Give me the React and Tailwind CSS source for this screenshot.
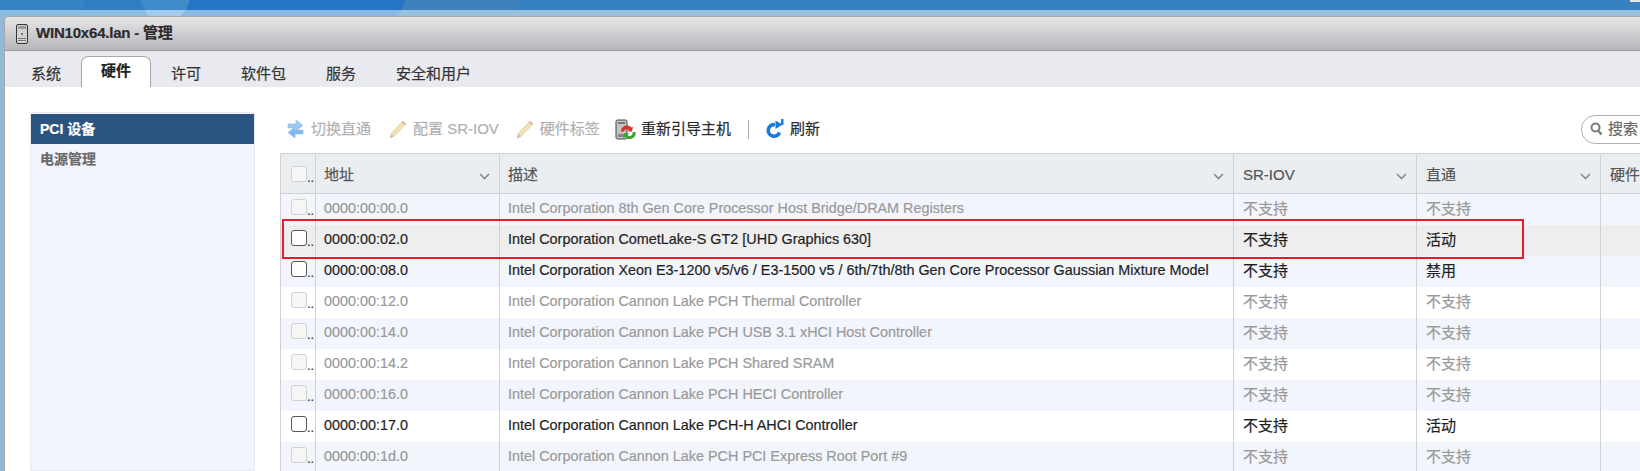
const font = { fontFamily: '"Liberation Sans","Noto Sans CJK SC",sans-serif' };

const rows = [
  ["0000:00:00.0", "Intel Corporation 8th Gen Core Processor Host Bridge/DRAM Registers", "不支持", "不支持", false, "bg-[#f2f5fb]"],
  ["0000:00:02.0", "Intel Corporation CometLake-S GT2 [UHD Graphics 630]", "不支持", "活动", true, "bg-[#eeeeee]"],
  ["0000:00:08.0", "Intel Corporation Xeon E3-1200 v5/v6 / E3-1500 v5 / 6th/7th/8th Gen Core Processor Gaussian Mixture Model", "不支持", "禁用", true, "bg-[#f2f5fb]"],
  ["0000:00:12.0", "Intel Corporation Cannon Lake PCH Thermal Controller", "不支持", "不支持", false, "bg-white"],
  ["0000:00:14.0", "Intel Corporation Cannon Lake PCH USB 3.1 xHCI Host Controller", "不支持", "不支持", false, "bg-[#f2f5fb]"],
  ["0000:00:14.2", "Intel Corporation Cannon Lake PCH Shared SRAM", "不支持", "不支持", false, "bg-white"],
  ["0000:00:16.0", "Intel Corporation Cannon Lake PCH HECI Controller", "不支持", "不支持", false, "bg-[#f2f5fb]"],
  ["0000:00:17.0", "Intel Corporation Cannon Lake PCH-H AHCI Controller", "不支持", "活动", true, "bg-white"],
  ["0000:00:1d.0", "Intel Corporation Cannon Lake PCH PCI Express Root Port #9", "不支持", "不支持", false, "bg-[#f2f5fb]"],
];

const Wallpaper = () => (
  <svg width="1640" height="16" viewBox="0 0 1640 16" className="block">
    <rect width="1640" height="10" fill="#3881c0" />
    <rect width="1640" height="6" y="10" fill="#9ac0e0" />
    <polygon points="0,0 86,0 82,10 0,10" fill="#3684c6" />
    <polygon points="86,0 140,0 145,10 82,10" fill="#2f7dc3" />
    <polygon points="140,0 190,0 186,10 145,10" fill="#408ccb" />
    <polygon points="190,0 406,0 402,10 186,10" fill="#2575c5" />
    <polygon points="406,0 520,0 516,10 402,10" fill="#3e82bd" />
    <polygon points="0,10 145,10 148,16 0,16" fill="#8dbce3" />
    <polygon points="145,10 186,10 181,16 148,16" fill="#a3cbee" />
    <polygon points="186,10 402,10 397,16 181,16" fill="#8ab8e4" />
    <polygon points="1630,0 1640,0 1640,2 1630,2" fill="#e4e8ec" />
  </svg>
);

const Chevron = () => (
  <svg width="11" height="7" viewBox="0 0 11 7" className="shrink-0 mt-[2px]">
    <path d="M1 1l4.500 4.500L10 1" fill="none" stroke="#8a8a8a" strokeWidth="1.600" />
  </svg>
);

const Check = ({ on }) => (
  <span className={`block w-[16px] h-[16px] shrink-0 rounded-[3px] border ${on ? "border-[#555555] bg-white" : "border-[#d2d2d2] bg-[#f6f6f6]"}`} />
);

const Dots = () => <span className="text-[13px] leading-[9px] h-[9px] w-[8px] overflow-hidden text-[#333333]">..</span>;

const Swap = () => (
  <svg width="17" height="20" viewBox="0 0 17 20" className="shrink-0">
    <path d="M1 5h8V1l7 5.500L9 12V9H1z" fill="#9cc8f2" stroke="#8dbde9" strokeWidth=".6" />
    <path d="M16 11H8V8l-7 5.500L8 19v-4h8z" fill="#84b8ec" stroke="#8dbde9" strokeWidth=".6" />
  </svg>
);

const Pencil = () => (
  <svg width="18" height="20" viewBox="0 0 18 20" className="shrink-0">
    <path d="M1 19l1.500-5L14 2l3 3L5.500 17z" fill="#f3e3b4" stroke="#d9cfa8" strokeWidth=".8" />
    <path d="M14 2l3 3-1.500 1.500-3-3z" fill="#e6b9a8" />
    <path d="M1 19l1.500-4 2.500 2.500z" fill="#c9c0a8" />
  </svg>
);

const Reboot = () => (
  <svg width="21" height="21" viewBox="0 0 21 21" className="shrink-0">
    <rect x="1" y="1" width="11" height="19" rx="1.500" fill="#c4c4c4" stroke="#444444" />
    <rect x="3" y="3" width="7" height="2" fill="#777777" />
    <rect x="3" y="15" width="7" height="3" fill="#888888" />
    <path d="M6 12.500a6 6 0 0 1 10.500-4l1.500-.5-1 4.500h-4.500l1.500-1.500a3 3 0 0 0-5 1.500z" fill="#d9322a" />
    <path d="M20.500 13a6 6 0 0 1-10.500 5l-1.500 1 .5-5h5l-1.500 2a3 3 0 0 0 5-3z" fill="#3aa63a" />
  </svg>
);

const Refresh = () => (
  <svg width="18" height="20" viewBox="0 0 18 20" className="shrink-0">
    <path d="M13.500 13.500A5.800 5.800 0 1 1 9 5.700" fill="none" stroke="#1d78dc" strokeWidth="3.600" />
    <path d="M9.500 1.500L16.500 5.500 9.500 10z" fill="#1d78dc" />
    <path d="M15 0h2.500v6H15z" fill="#1d78dc" />
  </svg>
);

const Server = () => (
  <svg width="12" height="20" viewBox="0 0 12 20" className="shrink-0">
    <rect x=".5" y=".5" width="11" height="19" rx="1.500" fill="#d2d2d2" stroke="#333333" />
    <rect x="2" y="2" width="8" height="3" fill="#9a9a9a" />
    <rect x="5" y="9" width="2" height="2" fill="#777777" />
    <rect x="2" y="14" width="8" height="1" fill="#777777" />
    <rect x="2" y="16" width="8" height="1" fill="#777777" />
  </svg>
);

const Num = ({ children }) => <span className="text-[14.4px] whitespace-nowrap">{children}</span>;

const ToolItem = ({ icon, label, dim, className = "" }) => (
  <div className={`flex shrink-0 items-center gap-[7px] text-[15px] whitespace-nowrap ${dim ? "text-[#b0b0b0]" : "text-[#2b2b2b]"} ${className}`}>
    {icon}
    <span>{label}</span>
  </div>
);

const HeadCell = ({ label, w, last, pl = "pl-[9px]" }) => (
  <div className={`${w} h-full shrink-0 flex items-center justify-between ${pl} pr-[9px] pt-[4px] ${last ? "" : "border-r border-[#cfd1d3]"}`}>
    <span className="text-[15px] text-[#555555] whitespace-nowrap">{label}</span>
    {!last && <Chevron />}
  </div>
);

const tabs = ["系统", "硬件", "许可", "软件包", "服务", "安全和用户"];

export default function App() {
  return (
    <div style={font} className="relative w-[1640px] h-[471px] overflow-hidden bg-[#93b9d8] [-webkit-text-stroke:0.2px]">
      <Wallpaper />
      <div className="ml-[4px] w-[1636px] h-[455px] flex flex-col bg-white border-l border-t border-[#a8a8a8] rounded-tl-[5px] overflow-hidden">
        <div className="h-[34px] shrink-0 flex items-center gap-[8px] pl-[11px] bg-gradient-to-b from-[#e6e6e8] to-[#b6b7ba] border-b border-[#9a9b9d]">
          <Server />
          <span className="text-[15px] font-bold text-[#2b2b2b] tracking-[-0.2px]">WIN10x64.lan - 管理</span>
        </div>
        <div className="h-[36px] shrink-0 flex items-end pl-[6px] bg-[#e8eaef] text-[15px] text-[#333333]">
          {tabs.map((t, i) =>
            i === 1 ? (
              <div key={t} className="h-[31px] px-[19px] flex items-center pb-[1px] bg-white border border-b-0 border-[#a8a8a8] rounded-t-[7px] font-bold text-[#222222]">{t}</div>
            ) : (
              <div key={t} className="h-[31px] px-[20px] flex items-center pt-[5px]">{t}</div>
            )
          )}
        </div>
        <div className="flex-1 flex pl-[25px] pt-[25px] min-h-0">
          <div className="w-[225px] shrink-0 border border-[#e6ebf3] bg-[#f2f5fb] text-[14px] font-bold">
            <div className="h-[30px] mt-[1px] flex items-center pl-[9px] bg-[#2c5480] text-white">PCI 设备</div>
            <div className="h-[30px] flex items-center pl-[9px] text-[#6a6a6a]">电源管理</div>
          </div>
          <div className="ml-[25px] flex-1 min-w-0 flex flex-col">
            <div className="h-[41px] shrink-0 flex items-center pl-[7px] pb-[7px]">
              <ToolItem dim icon={<Swap />} label="切换直通" />
              <ToolItem dim icon={<Pencil />} label="配置 SR-IOV" className="ml-[18px] !gap-[6px]" />
              <ToolItem dim icon={<Pencil />} label="硬件标签" className="ml-[17px] !gap-[6px]" />
              <ToolItem icon={<Reboot />} label="重新引导主机" className="ml-[15px] !gap-[5px]" />
              <div className="w-px h-[19px] shrink-0 bg-[#aaaaaa] ml-[17px]" />
              <ToolItem icon={<Refresh />} label="刷新" className="ml-[17px] !gap-[6px]" />
              <div className="ml-[761px] w-[80px] h-[29px] shrink-0 flex items-center gap-[5px] pl-[8px] border border-[#b0b0b0] rounded-[14px] text-[15px] text-[#666666]">
                <svg width="13" height="14" viewBox="0 0 13 14" className="shrink-0">
                  <circle cx="5.500" cy="5.500" r="4" fill="none" stroke="#7a7a7a" strokeWidth="2" />
                  <path d="M8.500 9l3 3.500" stroke="#7a7a7a" strokeWidth="2.400" />
                </svg>
                <span className="whitespace-nowrap">搜索</span>
              </div>
            </div>
            <div className="w-[1400px] border-l border-[#cfd1d3]">
              <div className="h-[41px] flex items-center bg-[#ebeef1] border-t border-b border-[#cfd1d3]">
                <div className="w-[35px] h-full shrink-0 flex items-center pl-[10px] border-r border-[#cfd1d3]">
                  <div className="flex items-end">
                    <Check />
                    <Dots />
                  </div>
                </div>
                <HeadCell label="地址" w="w-[184px]" pl="pl-[8px]" />
                <HeadCell label="描述" w="w-[734px]" pl="pl-[8px]" />
                <HeadCell label="SR-IOV" w="w-[183px]" />
                <HeadCell label="直通" w="w-[184px]" />
                <HeadCell label="硬件标签" w="w-[100px]" last />
              </div>
              {rows.map((r) => (
                <div key={r[0]} className={`h-[31px] flex items-center ${r[5]} ${r[4] ? "text-[#1f1f1f]" : "text-[#9a9a9a]"}`}>
                  <div className="w-[35px] h-full shrink-0 flex items-center pl-[10px] pb-[5px] border-r border-[#cfd1d3]">
                    <div className="flex items-end">
                      <Check on={r[4]} />
                      <Dots />
                    </div>
                  </div>
                  <div className="w-[184px] h-full shrink-0 flex items-center pl-[8px] pb-[1px] border-r border-[#cfd1d3]"><Num>{r[0]}</Num></div>
                  <div className="w-[734px] h-full shrink-0 flex items-center pl-[8px] pb-[1px] border-r border-[#cfd1d3]"><Num>{r[1]}</Num></div>
                  <div className="w-[183px] h-full shrink-0 flex items-center pl-[9px] pb-[1px] border-r border-[#cfd1d3] text-[15px]">{r[2]}</div>
                  <div className="w-[184px] h-full shrink-0 flex items-center pl-[9px] pb-[1px] border-r border-[#cfd1d3] text-[15px]">{r[3]}</div>
                </div>
              ))}
            </div>
          </div>
        </div>
      </div>
      <div className="absolute left-[282px] top-[219px] w-[1242px] h-[40px] border-2 border-[#e81c2c] pointer-events-none" />
    </div>
  );
}
